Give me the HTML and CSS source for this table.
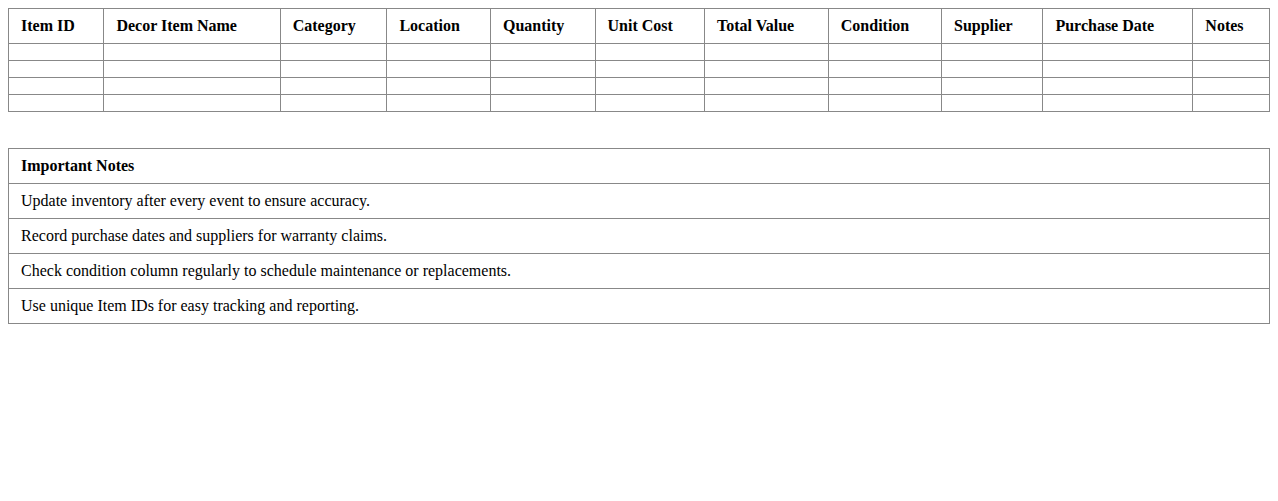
FILE: index.html
```html
<!DOCTYPE html>
<html>
<head>
<meta charset="utf-8">
<link rel="stylesheet" href="styles.css">
</head>
<body>
<table class="grid inventory">
  <thead>
    <tr>
      <th>Item ID</th>
      <th>Decor Item Name</th>
      <th>Category</th>
      <th>Location</th>
      <th>Quantity</th>
      <th>Unit Cost</th>
      <th>Total Value</th>
      <th>Condition</th>
      <th>Supplier</th>
      <th>Purchase Date</th>
      <th>Notes</th>
    </tr>
  </thead>
  <tbody>
    <tr><td></td><td></td><td></td><td></td><td></td><td></td><td></td><td></td><td></td><td></td><td></td></tr>
    <tr><td></td><td></td><td></td><td></td><td></td><td></td><td></td><td></td><td></td><td></td><td></td></tr>
    <tr><td></td><td></td><td></td><td></td><td></td><td></td><td></td><td></td><td></td><td></td><td></td></tr>
    <tr><td></td><td></td><td></td><td></td><td></td><td></td><td></td><td></td><td></td><td></td><td></td></tr>
  </tbody>
</table>
<table class="grid notes">
  <thead>
    <tr><th>Important Notes</th></tr>
  </thead>
  <tbody>
    <tr><td>Update inventory after every event to ensure accuracy.</td></tr>
    <tr><td>Record purchase dates and suppliers for warranty claims.</td></tr>
    <tr><td>Check condition column regularly to schedule maintenance or replacements.</td></tr>
    <tr><td>Use unique Item IDs for easy tracking and reporting.</td></tr>
  </tbody>
</table>
</body>
</html>
```
FILE: styles.css
```css
body {
  margin: 8px;
  font-family: "Liberation Serif", "Times New Roman", serif;
  font-size: 16px;
  color: #000;
  background: #fff;
}
.grid {
  width: 100%;
  border-collapse: collapse;
}
.grid th,
.grid td {
  border: 1px solid #888;
  padding: 8px 12px;
  text-align: left;
}
.grid th {
  font-weight: bold;
}
.inventory {
  margin-bottom: 36px;
}
```
